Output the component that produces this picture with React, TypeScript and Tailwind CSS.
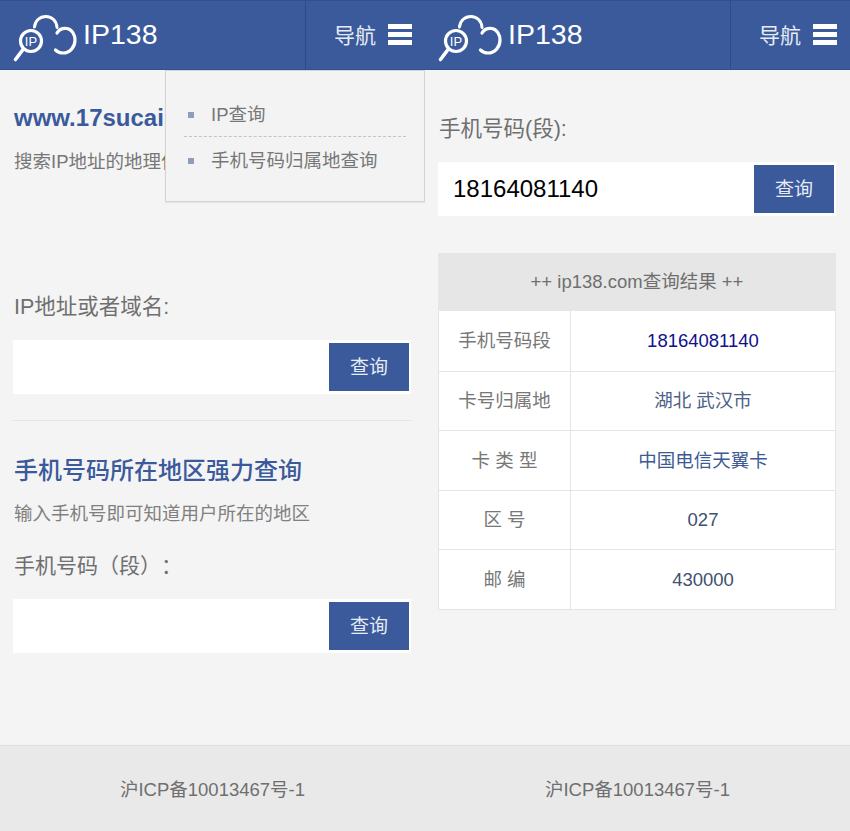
import React from 'react';

const FONT = "font-['Liberation_Sans','Noto_Sans_CJK_SC',sans-serif]";

const Logo = () => (
  <svg width="66" height="50" viewBox="0 0 66 50" fill="none" stroke="#fff" strokeLinecap="round" className="mt-[13px] shrink-0 self-start">
    <path d="M22.500 13 C23 7 27.500 2.500 34 2.500 C40 2.500 44.500 7 45 13.500" strokeWidth="3" />
    <path d="M45 19 C47 15.500 51 14 55 14.500 C60 15.500 63 20.500 63 26 C63 33 58 39 51 39 C48 39 45.500 38 43.500 36" strokeWidth="3.200" />
    <circle cx="19" cy="27" r="10.500" strokeWidth="3.200" />
    <text x="19" y="31.800" textAnchor="middle" fill="#fff" stroke="none" fontSize="13" fontFamily="Liberation Sans">IP</text>
    <path d="M11 35.500 L3.500 45.500" strokeWidth="3.600" />
  </svg>
);

const Header = () => (
  <header className="flex h-[70px] border-t border-b border-[#334f8c] bg-[#3a5a9b] text-white">
    <div className="flex flex-1 items-center pl-[12px]">
      <Logo />
      <span className="ml-[5px] -mt-[2px] text-[28.500px] leading-none">IP138</span>
    </div>
    <div className="flex w-[120px] items-center border-l border-[#304a86] pl-[28px]">
      <span className="text-[21px] leading-none text-[#e6ebf4]">导航</span>
      <div className="mb-[2px] ml-[12px] flex w-[24px] flex-col gap-[3px]">
        <i className="h-[5px] bg-white" />
        <i className="h-[5px] bg-white" />
        <i className="h-[5px] bg-white" />
      </div>
    </div>
  </header>
);

const SearchBox = ({ value }: { value?: string }) => (
  <div className="-ml-px flex h-[54px] w-[398px] items-center bg-white pr-[2px]">
    <input
      readOnly
      value={value ?? ''}
      className="h-full min-w-0 flex-1 bg-transparent pl-[15px] text-[24px] text-black outline-none"
    />
    <button className="h-[48px] w-[80px] bg-[#3a5a9b] pt-[2px] text-[19px] text-[#e6ebf4]">查询</button>
  </div>
);

const Footer = () => (
  <footer className="mt-auto flex h-[86px] items-center justify-center border-t border-[#dedede] bg-[#e9e9e9] pt-[3px] text-[18.500px] text-[#6f6f6f]">
    沪ICP备10013467号-1
  </footer>
);

const rows = [
  { label: '手机号码段', value: '18164081140', color: 'text-[#10108c]' },
  { label: '卡号归属地', value: '湖北 武汉市', color: 'text-[#4d6186]' },
  { label: '卡 类 型', value: '中国电信天翼卡', color: 'text-[#3d5a92]' },
  { label: '区 号', value: '027', color: 'text-[#3f5070]' },
  { label: '邮 编', value: '430000', color: 'text-[#3f5070]' },
];

const LeftPage = () => (
  <div className="relative flex min-h-[831px] flex-col">
    <Header />
    <div className="pl-[14px]">
      <h1 className="mt-[33px] whitespace-nowrap text-[24px] font-bold leading-[30px] text-[#3a5a9b]">www.17sucai</h1>
      <p className="mt-[17px] whitespace-nowrap text-[18.500px] leading-[24px] text-[#777]">搜索IP地址的地理位置</p>
      <p className="mt-[119px] text-[21.500px] leading-[28px] text-[#6f6f6f]">IP地址或者域名:</p>
      <div className="mt-[19px]">
        <SearchBox />
      </div>
      <div className="-ml-px mt-[26px] h-px w-[398px] bg-[#e6e6e6]" />
      <h2 className="mt-[35px] text-[24px] font-medium leading-[30px] text-[#3a5a9b]">手机号码所在地区强力查询</h2>
      <p className="mt-[16px] text-[18.500px] leading-[24px] text-[#808080]">输入手机号即可知道用户所在的地区</p>
      <p className="mt-[26px] text-[21px] leading-[28px] text-[#6f6f6f] [text-spacing-trim:space-all]">手机号码（段）：</p>
      <div className="mt-[19px]">
        <SearchBox />
      </div>
    </div>
    <Footer />
    <nav className="absolute left-[165px] top-[70px] h-[132px] w-[260px] border border-[#d4d4d4] bg-[#f3f3f3] px-[18px] pt-[23px] shadow-[0_1px_1px_rgba(0,0,0,0.06)]">
      <div className="flex h-[43px] items-center border-b border-dashed border-[#c4c4c4] pl-[4px] text-[18.500px] text-[#777]">
        <i className="mr-[17px] h-[6px] w-[6px] bg-[#8f9dbd]" />
        IP查询
      </div>
      <div className="flex h-[48px] items-center pl-[4px] text-[18.500px] text-[#777]">
        <i className="mr-[17px] h-[6px] w-[6px] bg-[#8f9dbd]" />
        手机号码归属地查询
      </div>
    </nav>
  </div>
);

const RightPage = () => (
  <div className="flex min-h-[831px] flex-col">
    <Header />
    <div className="pl-[14px]">
      <p className="mt-[45px] text-[21.500px] leading-[28px] text-[#6f6f6f]">手机号码(段):</p>
      <div className="mt-[19px]">
        <SearchBox value="18164081140" />
      </div>
      <div className="-ml-px mt-[37px] w-[398px]">
        <div className="flex h-[58px] items-center justify-center bg-[#e6e6e6] text-[18.500px] text-[#6f6f6f]">++ ip138.com查询结果 ++</div>
        <div className="border-x border-b border-[#e4e4e4] bg-white">
          {rows.map((row, i) => (
            <div key={row.label} className={`flex h-[59.600px] text-[18.500px] ${i > 0 ? 'border-t border-[#e4e4e4]' : ''}`}>
              <div className="flex w-[132px] items-center justify-center whitespace-pre border-r border-[#e4e4e4] text-[#777]">{row.label}</div>
              <div className={`flex flex-1 items-center justify-center whitespace-pre ${row.color}`}>{row.value}</div>
            </div>
          ))}
        </div>
      </div>
    </div>
    <Footer />
  </div>
);

export default function App() {
  return (
    <div className={`grid w-[850px] grid-cols-2 overflow-hidden bg-[#f4f4f4] ${FONT}`}>
      <LeftPage />
      <RightPage />
    </div>
  );
}
